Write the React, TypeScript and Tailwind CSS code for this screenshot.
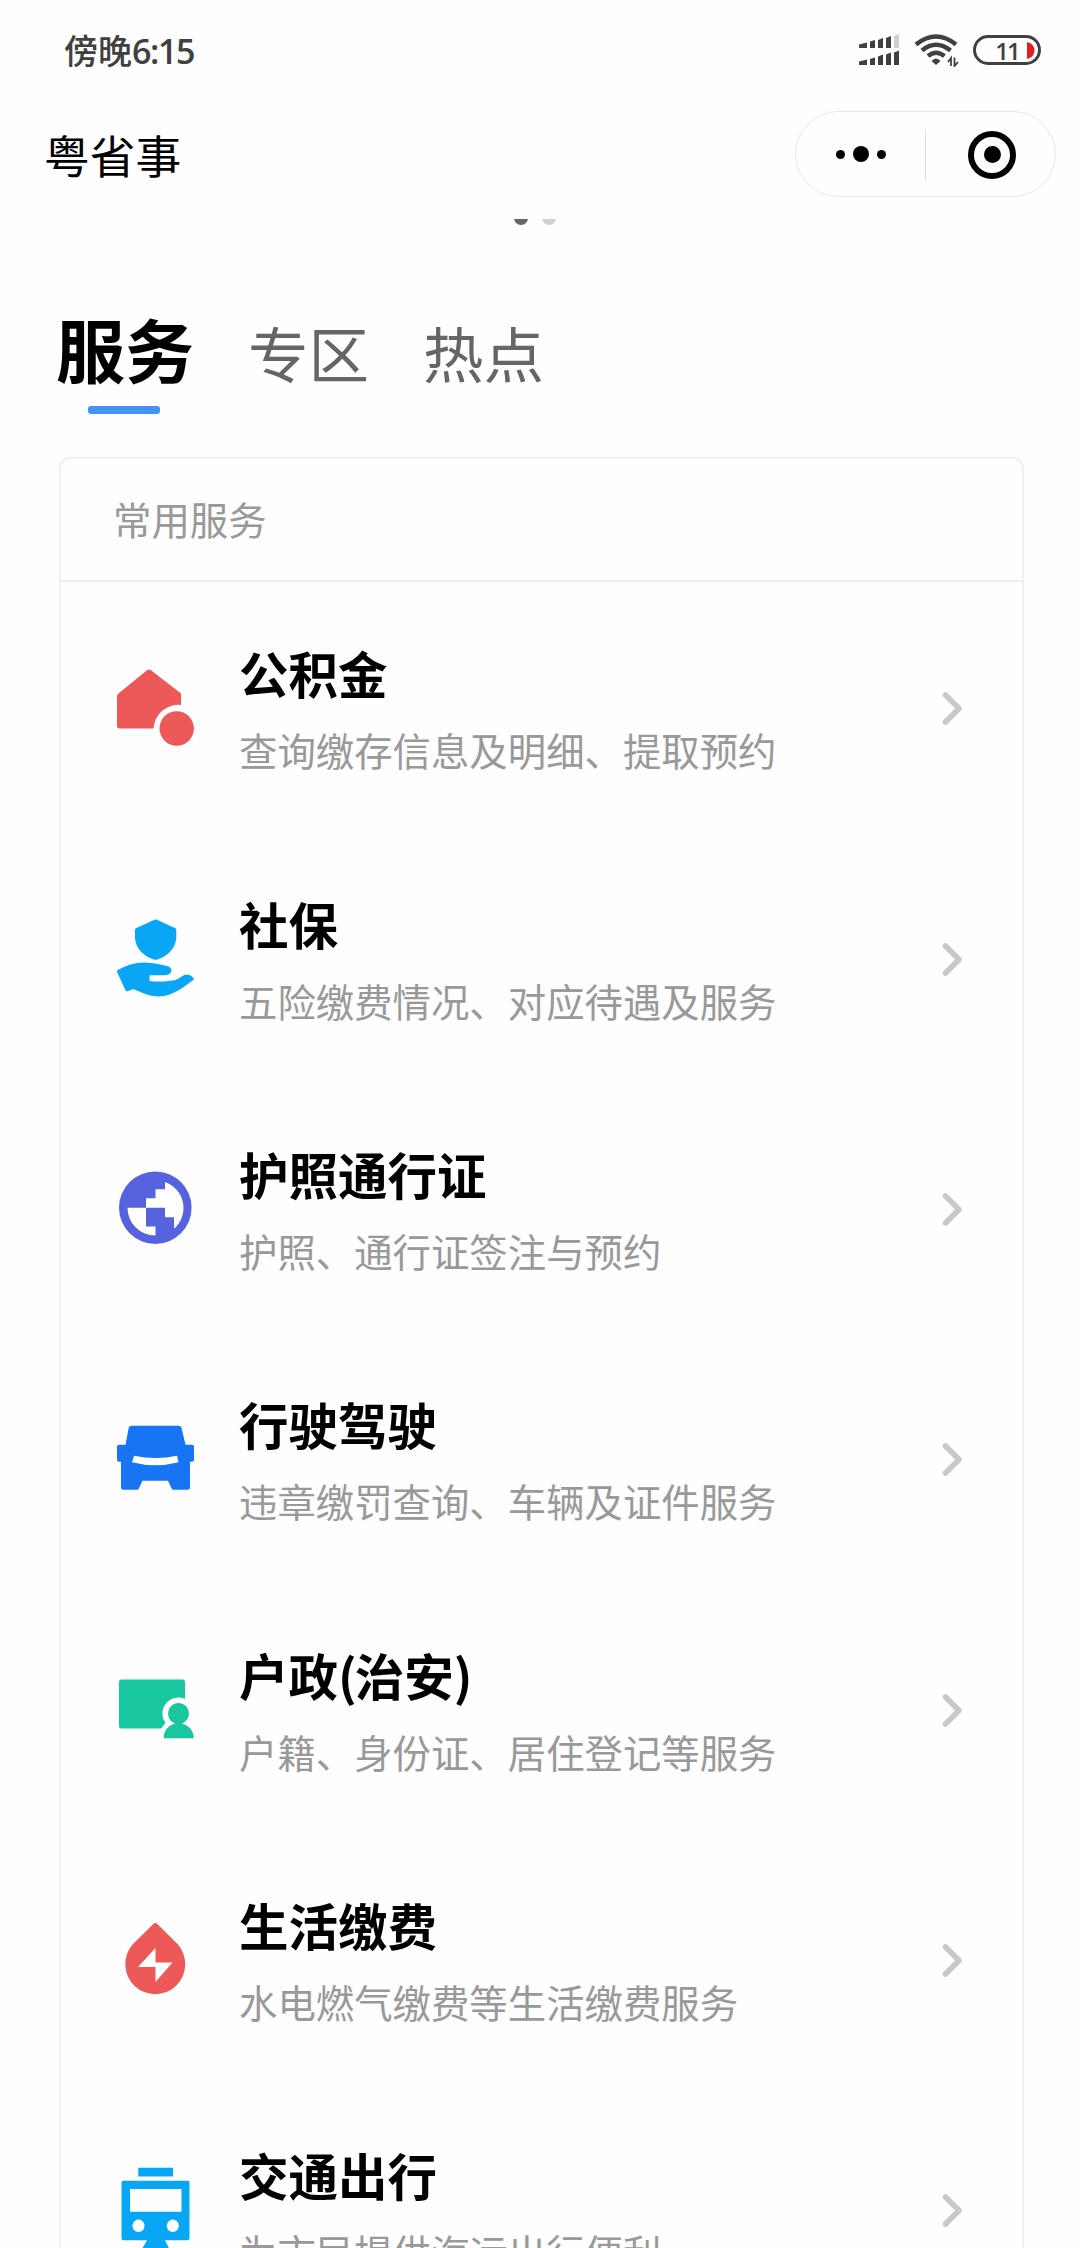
import type { ReactNode } from "react";

function HouseIcon() {
  return (
    <svg width="100" height="100" viewBox="100 658 100 100" className="shrink-0">
      <path d="M118.500 693.500 147 670.200q2-1.400 4 0L181 693.500V705a25 25 0 0 0-27.500 23.500H119.500q-2.500 0-2.500-2.500V696q0-1.500 1.500-2.500Z" fill="#ed5858" />
      <circle cx="176.700" cy="728.500" r="17.200" fill="#ed5858" />
    </svg>
  );
}

function CareIcon() {
  return (
    <svg width="100" height="100" viewBox="100 908.500 100 100" className="shrink-0" fill="#08a7f5">
      <path d="M154.500 919.300q1.200-.6 2.400 0l18.500 8.500q.9.500.9 1.700v6.500c0 13-11 21-19.600 23.200q-1 .2-2 0C146 957 135 949 135 936v-6.500q0-1.200.9-1.700Z" />
      <path d="M117.800 969.500c8-4.500 18-7.700 27-7.500 8 .2 16.500 2.200 23 3.800 4 1.200 4.500 5 2.300 7.200-2 1.800-5.500 1.800-9 1.800H149.500v5.800c9 1 21 .5 26.500-1.300 5-2 6.500-5.300 11.500-5.300 2.800 0 5 2.300 6 3.500.7.800.4 1.300-.4 2-8.600 6.500-20 16.200-34.500 16.500-9 .1-17-4-24-7q-2-.8-3.500.2l-3 1.400q-2 .8-2.700-1L117 971.500q-.5-1.300.8-2Z" />
    </svg>
  );
}

function GlobeIcon() {
  return (
    <svg width="100" height="100" viewBox="100 1158.800 100 100" className="shrink-0">
      <circle cx="155.300" cy="1207.500" r="36.300" fill="#5762de" />
      <path d="M165 1181.700A27.500 27.500 0 0 1 174 1228.500V1217H165V1207.500H146V1198H155.500V1189H165ZM127.500 1207.500H146V1226.300H155.500V1235.300A27.800 27.800 0 0 1 127.500 1207.500Z" fill="#fff" />
    </svg>
  );
}

function CarIcon() {
  return (
    <svg width="100" height="100" viewBox="100 1409.200 100 100" className="shrink-0">
      <path d="M131.500 1426H178.500q2.500 0 3 2L185.500 1445H192q2 0 2 2v13q0 2-2 2h-2v25.500q0 2.500-2.500 2.500H173.500q-1.500 0-2-1.500L168 1481H142.500L139 1488.500q-.6 1.500-2 1.500H123.500q-2.500 0-2.500-2.500V1462h-2q-2 0-2-2V1447q0-2 2-2h6.500L128.700 1428q.6-2 2.800-2Z" fill="#1775f3" />
      <path d="M134 1456q22 4.500 43 0l1.500 6.500q-23 6-46.500 0Z" fill="#fff" />
    </svg>
  );
}

function ResidenceIcon() {
  return (
    <svg width="100" height="100" viewBox="100 1659.500 100 100" className="shrink-0" fill="#18c79f">
      <path d="M121.500 1679H182.500q2.500 0 2.500 2.500V1698.500A16 16 0 0 0 165.500 1722.500L161 1728H121.500q-2.500 0-2.500-2.500V1681.500q0-2.500 2.500-2.500Z" />
      <circle cx="178.500" cy="1713" r="10.500" />
      <path d="M163.700 1737.700c0-8.500 5-12.700 11-14.500V1720h7.600v3.200c6 1.800 11.500 6 11.500 14.500Z" />
    </svg>
  );
}

function EnergyIcon() {
  return (
    <svg width="100" height="100" viewBox="100 1909.900 100 100" className="shrink-0">
      <path d="M153.300 1923.900q2-2 4 0L178 1944.500a30 30 0 1 1-45.500 0Z" fill="#ed5858" />
      <path d="M155.500 1948v14.500h17L155.500 1982v-15H138Z" fill="#fff" />
    </svg>
  );
}

function TrainIcon() {
  return (
    <svg width="100" height="100" viewBox="100 2160.200 100 100" className="shrink-0" fill="#08a7f5">
      <path d="M138.300 2168h34.700v8.700h-34.700Z" />
      <path fillRule="evenodd" d="M123.500 2181h64q2 0 2 2v55.500q0 2-2 2H165l7 14H139l8-14h-23.500q-2 0-2-2V2183q0-2 2-2ZM130 2189.300v22.700h51.500v-22.700Zm8.500 30.500a6 6.200 0 1 0 .01 0Zm34.300 0a6 6.200 0 1 0 .01 0Z" />
    </svg>
  );
}

const services: { icon: ReactNode; title: ReactNode; detail: string }[] = [
  { icon: <HouseIcon />, title: "公积金", detail: "查询缴存信息及明细、提取预约" },
  { icon: <CareIcon />, title: "社保", detail: "五险缴费情况、对应待遇及服务" },
  { icon: <GlobeIcon />, title: "护照通行证", detail: "护照、通行证签注与预约" },
  { icon: <CarIcon />, title: "行驶驾驶", detail: "违章缴罚查询、车辆及证件服务" },
  {
    icon: <ResidenceIcon />,
    title: (
      <>
        户政<span className="tracking-[-2px]">(</span>治安<span className="tracking-[-2px]">)</span>
      </>
    ),
    detail: "户籍、身份证、居住登记等服务",
  },
  { icon: <EnergyIcon />, title: "生活缴费", detail: "水电燃气缴费等生活缴费服务" },
  { icon: <TrainIcon />, title: "交通出行", detail: "为市民提供汽运出行便利" },
];

function StatusBar() {
  return (
    <div className="flex h-[100px] shrink-0 items-center pl-[64px] pr-[39px] text-[#404040]">
      <span className="text-[34px] font-medium leading-[50px]">
        傍晚<span className="font-['Open_Sans','Noto_Sans_CJK_SC',sans-serif] text-[34px] font-semibold tracking-[-1.400px]">6:15</span>
      </span>
      <svg className="ml-auto" width="40" height="32" viewBox="859 35 40 32" fill="#404040">
        <path d="M859 45.500l8-2V49h-8ZM870 42.500l5-1.500v8h-5ZM878 41l5-2v10h-5ZM886 39l5-2v12h-5ZM859 62.500l8-2V66h-8ZM870 60l5-1.500V66h-5ZM878 57.500l5-2V66h-5ZM886 55.500l5-2V66h-5ZM894 53.500l5-2V66h-5Z" />
        <path d="M894 37l5-2v14h-5Z" fill="#d0d0d0" />
      </svg>
      <svg className="ml-[15px]" width="45" height="34" viewBox="914 34 45 34" fill="none" stroke="#404040" strokeWidth="4.600">
        <path d="M916 45.500q20-16 40 0M922 51.500q14-11.500 28.500 0M928 57q8-6.500 16.500 0" />
        <path d="M931.500 62q4.500-5 9 0l-4.500 4Z" fill="#404040" stroke="none" />
        <path d="M951 67V59l-3 4M954.500 58.500V67l3.500-4" strokeWidth="1.800" />
      </svg>
      <div className="relative ml-[14px] flex h-[30px] w-[68px] items-center justify-center rounded-full border-[3px] border-[#404040]">
        <span className="pt-[1px] font-['Open_Sans',sans-serif] text-[24px] font-semibold leading-none tracking-[-2px]">11</span>
        <svg className="absolute right-[3px] top-[4px]" width="8" height="17" viewBox="0 0 8 17">
          <path d="M0 0q7.500 2 7.500 8.500T0 17Z" fill="#e02020" />
        </svg>
      </div>
    </div>
  );
}

function TitleBar() {
  return (
    <div className="flex h-[119px] shrink-0 items-start justify-between pl-[44px] pr-[24px]">
      <h1 className="mt-[22px] text-[45.800px] font-normal leading-[64px] text-black">粤省事</h1>
      <div className="mt-[11px] flex h-[86px] w-[261px] items-center rounded-full border border-[#e8e8e8]">
        <div className="flex w-[129px] items-center justify-center gap-[8px]">
          <span className="size-[9px] rounded-full bg-black" />
          <span className="size-[16px] rounded-full bg-black" />
          <span className="size-[9px] rounded-full bg-black" />
        </div>
        <span className="h-[51px] w-px bg-[#dedede]" />
        <div className="flex flex-1 justify-center pl-[3px] pt-[1px]">
          <span className="flex size-[48px] items-center justify-center rounded-full border-[6px] border-black">
            <span className="size-[17px] rounded-full bg-black" />
          </span>
        </div>
      </div>
    </div>
  );
}

export default function App() {
  return (
    <main className="flex h-[2248px] w-[1080px] flex-col overflow-hidden bg-[#fefefe] font-['Noto_Sans_CJK_SC',sans-serif]">
      <StatusBar />
      <TitleBar />
      <div className="flex h-[6px] shrink-0 items-end justify-center gap-[14px] overflow-hidden pr-[11px]">
        <span className="size-[14px] shrink-0 rounded-full bg-[#666]" />
        <span className="size-[14px] shrink-0 rounded-full bg-[#d0d0d0]" />
      </div>
      <nav className="flex h-[232px] shrink-0 items-start pl-[56px] pt-[73px]">
        <div className="flex w-[138px] flex-col items-center">
          <span className="text-[69px] font-bold leading-[100px] text-black">服务</span>
          <span className="mr-[2px] mt-[8px] h-[8px] w-[72px] rounded-[3px] bg-[#4392f5]" />
        </div>
        <span className="ml-[54px] mt-[4px] text-[60.500px] leading-[100px] text-[#666]">专区</span>
        <span className="ml-[54px] mt-[4px] text-[60.500px] leading-[100px] text-[#666]">热点</span>
      </nav>
      <section className="ml-[59px] h-[1900px] w-[965px] shrink-0 rounded-[11px] border-2 border-[#f0f0f0]">
        <h2 className="h-[123px] border-b-2 border-[#ededed] pl-[52px] text-[38.400px] font-normal leading-[119px] text-[#999]">常用服务</h2>
        <ul className="pt-[1px]">
          {services.map((s) => (
            <li key={s.detail} className="flex h-[250.350px] items-center pl-[39px] pr-[59px]">
              {s.icon}
              <div className="ml-[39px] flex-1 pt-[6px]">
                <div className="text-[49.500px] font-bold leading-[77px] text-black">{s.title}</div>
                <div className="text-[38.400px] leading-[77px] text-[#999]">{s.detail}</div>
              </div>
              <svg width="22" height="36" viewBox="0 0 22 36" fill="none" stroke="#c7c7cc" strokeWidth="5.500" strokeLinecap="round" strokeLinejoin="round">
                <path d="M4.500 5 18 18.500 4.500 32" />
              </svg>
            </li>
          ))}
        </ul>
      </section>
    </main>
  );
}
